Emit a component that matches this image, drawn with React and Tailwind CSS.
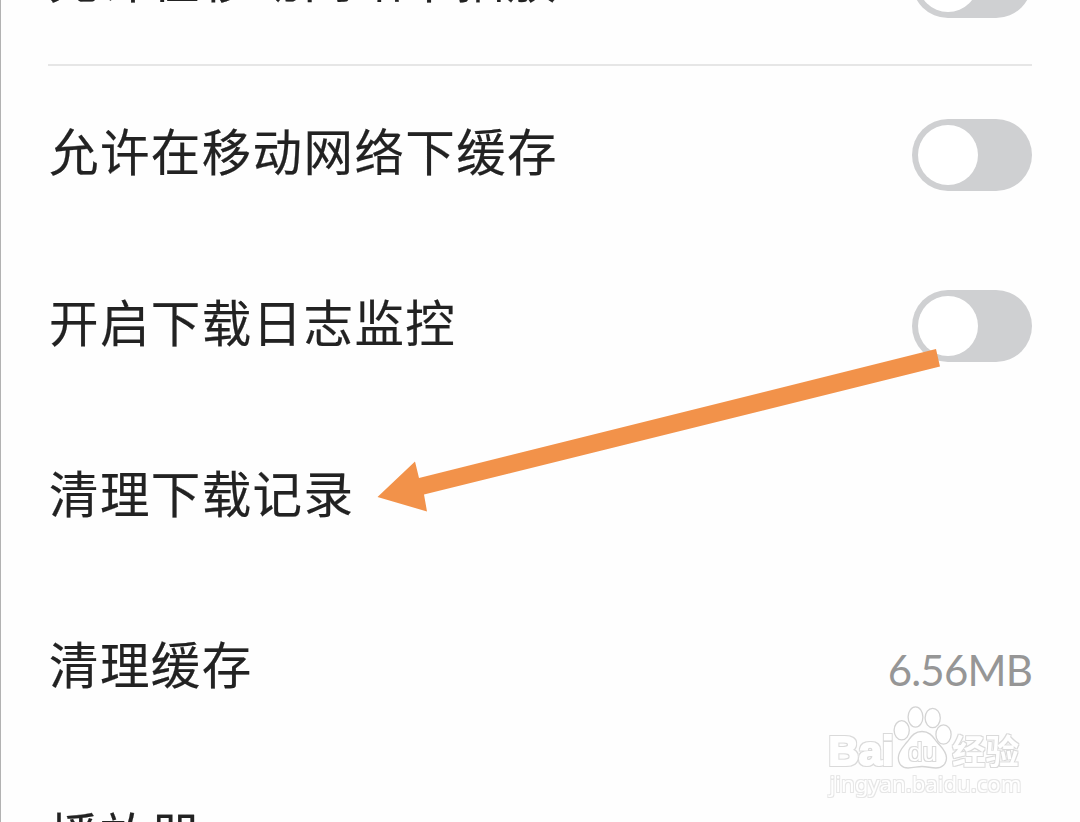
function Toggle() {
  return (
    <span className="flex h-[72px] w-[120px] shrink-0 items-center rounded-full bg-[#cfd0d2] pl-1.5">
      <span className="h-[60px] w-[60px] rounded-full bg-white" />
    </span>
  );
}

function Row({ label, children }) {
  return (
    <div className="flex h-[171px] shrink-0 items-center justify-between">
      <span className="whitespace-nowrap pb-[9px] pl-px text-[49.5px] leading-none tracking-[1.4px] [-webkit-text-stroke:0.2px_#222222]">
        {label}
      </span>
      {children}
    </div>
  );
}

function Arrow() {
  return (
    <svg
      className="pointer-events-none absolute -left-px top-0"
      width="1080"
      height="822"
      viewBox="0 0 1080 822"
      aria-hidden
    >
      <path
        d="M377.500 497 L415 461.500 L419 478 L936 349 L940 366.500 L424 494.500 L427 511.500 Z"
        fill="#f2924a"
      />
    </svg>
  );
}

function Watermark() {
  return (
    <svg
      className="pointer-events-none absolute left-[819px] top-[700px]"
      width="210"
      height="104"
      viewBox="820 700 210 104"
      fill="#fff"
    >
      <defs>
        {/* thin grey rim around white lettering */}
        <filter id="rim" x="-10%" y="-20%" width="120%" height="140%">
          <feMorphology in="SourceAlpha" operator="dilate" radius="1" result="grown" />
          <feFlood floodColor="#dadada" />
          <feComposite in2="grown" operator="in" result="edge" />
          <feMerge>
            <feMergeNode in="edge" />
            <feMergeNode in="SourceGraphic" />
          </feMerge>
        </filter>
        <filter id="rimLight" x="-10%" y="-20%" width="120%" height="140%">
          <feMorphology in="SourceAlpha" operator="dilate" radius="1" result="grown" />
          <feFlood floodColor="#e6e6e6" />
          <feComposite in2="grown" operator="in" result="edge" />
          <feMerge>
            <feMergeNode in="edge" />
            <feMergeNode in="SourceGraphic" />
          </feMerge>
        </filter>
      </defs>
      <text
        x="828.500"
        y="765"
        fontSize="41"
        fontFamily="'Liberation Sans', Arial, sans-serif"
        fontWeight="700"
        textLength="65"
        lengthAdjust="spacingAndGlyphs"
        stroke="#fff"
        strokeWidth="2"
        filter="url(#rim)"
      >
        Bai
      </text>
      <g stroke="#d4d4d4" strokeWidth="1.3">
        <ellipse cx="901.700" cy="730.300" rx="7.600" ry="9.600" />
        <ellipse cx="915.500" cy="717" rx="7.400" ry="10.200" />
        <ellipse cx="932.700" cy="718" rx="7.600" ry="9.600" />
        <ellipse cx="943.500" cy="734.500" rx="7.600" ry="9.600" />
        <path d="M922 731.500 C930 731.500 933 737 937 742 C941 747 946.500 751 946.500 758 C946.500 764 942 768 936 768 C931 768 927 766.500 922 766.500 C917 766.500 914 768 908 768 C902 768 898.300 764 898.300 758 C898.300 751 903 747 907 742 C911 737 914 731.500 922 731.500 Z" />
      </g>
      <text
        x="908"
        y="761"
        fontSize="25"
        fontFamily="'Liberation Sans', Arial, sans-serif"
        textLength="29"
        lengthAdjust="spacingAndGlyphs"
        filter="url(#rim)"
      >
        du
      </text>
      <text
        x="952"
        y="764"
        fontSize="34"
        fontFamily="'Noto Sans CJK SC', sans-serif"
        fontWeight="700"
        textLength="67"
        lengthAdjust="spacingAndGlyphs"
        filter="url(#rim)"
      >
        经验
      </text>
      <text
        x="829.500"
        y="792"
        fontSize="21.500"
        fontFamily="'Noto Sans', sans-serif"
        textLength="192"
        lengthAdjust="spacingAndGlyphs"
        filter="url(#rimLight)"
      >
        jingyan.baidu.com
      </text>
    </svg>
  );
}

export default function App() {
  return (
    <main className="relative h-[822px] w-[1080px] overflow-hidden border-l border-[#b2b2b2] bg-[#fefefe] font-['Noto_Sans_CJK_SC',sans-serif] text-[#222222]">
      <div className="-mt-[104px] flex flex-col pl-[47px] pr-12">
        <Row label="允许在移动网络下播放">
          <Toggle />
        </Row>
        <div className="-mt-[3px] mb-[3px] h-0.5 shrink-0 bg-[#e6e6e6]" />
        <Row label="允许在移动网络下缓存">
          <Toggle />
        </Row>
        <Row label="开启下载日志监控">
          <Toggle />
        </Row>
        <Row label="清理下载记录" />
        <Row label="清理缓存">
          <span className="pt-1 font-['Lato',sans-serif] text-[42px] leading-none tracking-[-0.8px] text-[#969696] [font-kerning:none]">
            6.56MB
          </span>
        </Row>
        <Row label="播放器" />
      </div>
      <Watermark />
      <Arrow />
    </main>
  );
}
